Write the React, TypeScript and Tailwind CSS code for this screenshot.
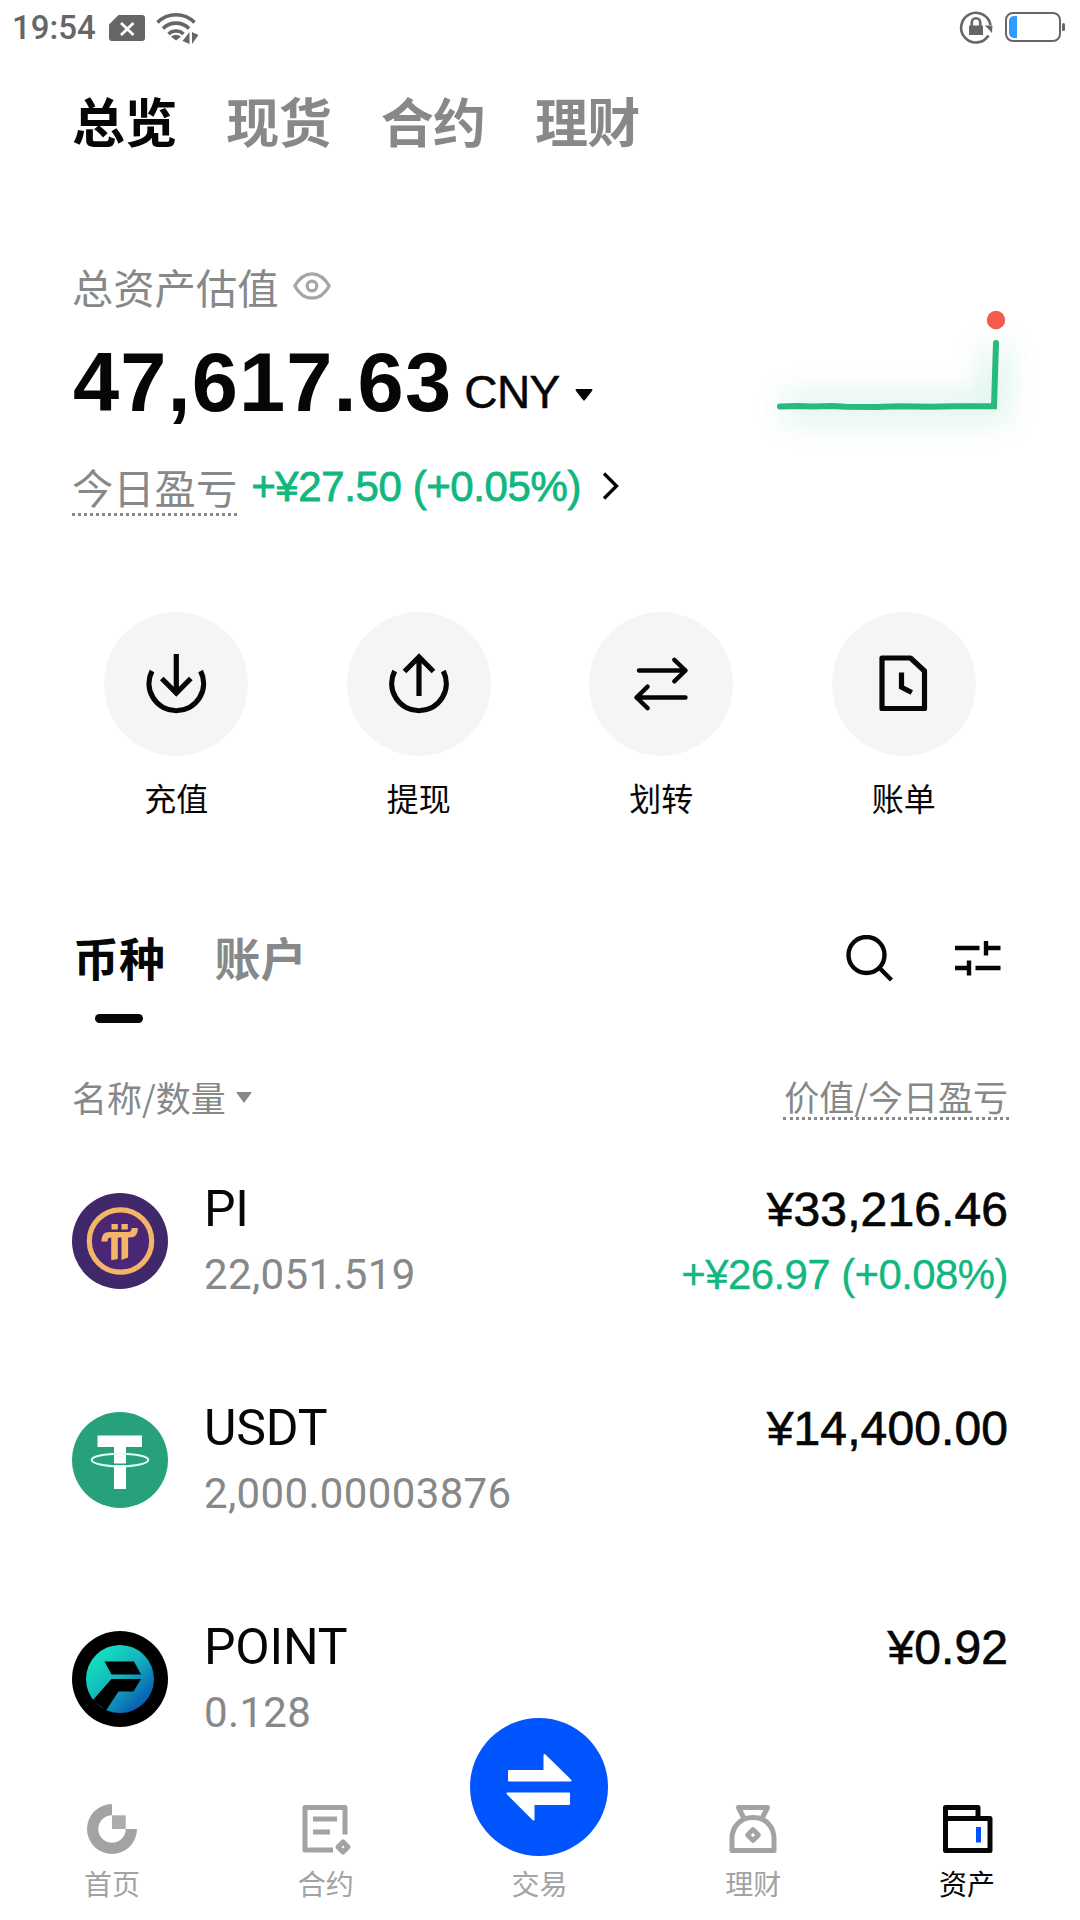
import type { ReactNode } from "react"

const MAIN_TABS = ["总览", "现货", "合约", "理财"]

const PiLogo = () => (
  <svg viewBox="0 0 96 96" className="size-24">
    <circle cx="48" cy="48" r="48" fill="#41286a" />
    <circle cx="48.5" cy="48" r="31.2" fill="#4a2675" stroke="#f4b567" strokeWidth="5.2" />
    <g fill="#f4b567">
      <rect x="39.5" y="31" width="6.3" height="5.5" />
      <rect x="49.5" y="31" width="6.3" height="5.5" />
      <path d="M29.5 48.5c0-6.500 2.500-9.500 8-9.500H56c2.800 0 3.600-1.300 3.600-4h6.300c0 6.500-2.700 9.500-8 9.500H39c-2.600 0-3.500 1.300-3.500 4z" />
      <path d="M39.2 43h6.600v23l-6.600 1.300zM49.500 43h6.600v21.500l-6.600 2.500z" />
    </g>
  </svg>
)

const UsdtLogo = () => (
  <svg viewBox="0 0 96 96" className="size-24">
    <circle cx="48" cy="48" r="48" fill="#26a17b" />
    <path d="M25.5 23.500H70V35H54v42H42V35H25.500z" fill="#fff" />
    <ellipse cx="48" cy="48" rx="28.3" ry="6.3" fill="none" stroke="#e4fff5" strokeWidth="2" />
    <path d="M42 51.500h12v1.500H42z" fill="#26a17b" />
  </svg>
)

const PointLogo = () => (
  <svg viewBox="0 0 96 96" className="size-24">
    <defs>
      <linearGradient id="pointFill" x1="0.2" y1="0.15" x2="0.85" y2="0.85">
        <stop offset="0" stopColor="#14dcc0" />
        <stop offset="0.45" stopColor="#14b4bd" />
        <stop offset="1" stopColor="#0a5cb4" />
      </linearGradient>
    </defs>
    <circle cx="48" cy="48" r="48" fill="#000" />
    <circle cx="48" cy="48" r="34" fill="url(#pointFill)" />
    <path d="M32.5 30.500H62L69 43.500H39.500z" fill="#000" />
    <path d="M39.5 48H69L61.500 60.500H46.500L34 79.500 20.500 69.500z" fill="#000" />
  </svg>
)

const COINS = [
  { name: "PI", amount: "22,051.519", value: "¥33,216.46", pnl: "+¥26.97 (+0.08%)", logo: <PiLogo /> },
  { name: "USDT", amount: "2,000.00003876", value: "¥14,400.00", pnl: "", logo: <UsdtLogo /> },
  { name: "POINT", amount: "0.128", value: "¥0.92", pnl: "", logo: <PointLogo /> },
]

const ACTIONS: { label: string; icon: ReactNode }[] = [
  {
    label: "充值",
    icon: (
      <>
        <path d="M6 17a27.300 27.300 0 1 0 48.600 0" />
        <path d="M30.300 0v39M15.800 24.500l14.500 14.500 14.500-14.500" />
      </>
    ),
  },
  {
    label: "提现",
    icon: (
      <>
        <path d="M5.700 17a27.300 27.300 0 1 0 48.600 0" />
        <path d="M30 42V3.500M15.500 17.500 30 3l14.500 14.500" />
      </>
    ),
  },
  {
    label: "划转",
    icon: (
      <g strokeWidth="4.4" strokeLinecap="round" strokeLinejoin="round">
        <path d="M8 16.500h46.500M43.300 5.800 54.500 16.500 43.300 27.300" />
        <path d="M54.500 43.500h-49M16.600 32.700 5.500 43.500l11.100 10.700" />
      </g>
    ),
  },
  {
    label: "账单",
    icon: (
      <>
        <path d="M8 4h28.500L50.500 17v37.500H8z" strokeLinejoin="round" />
        <path d="M27.500 18.500v14.700l10.300 5.300" />
      </>
    ),
  },
]

const NAV: { label: string; icon: ReactNode }[] = [
  {
    label: "首页",
    icon: (
      <>
        <path d="M25 1A25 25 0 1 0 50 26H38.700A13.700 13.700 0 1 1 25 12.300z" fill="currentColor" />
        <path d="M25 12.300h13.700V26H25z" fill="currentColor" opacity="0.9" />
      </>
    ),
  },
  {
    label: "合约",
    icon: (
      <g fill="none" stroke="currentColor" strokeWidth="5">
        <path d="M32 47H4V4.500h40v27" strokeLinejoin="round" />
        <path d="M12 16h24M12 29h17" />
        <path d="m42 39 5 5-5 5-5-5z" strokeLinejoin="round" />
      </g>
    ),
  },
  { label: "交易", icon: null },
  {
    label: "理财",
    icon: (
      <g fill="none" stroke="currentColor" strokeWidth="5" strokeLinejoin="round">
        <path d="M16.300 16 10.500 4.500h29L33.700 16" />
        <path d="M4 47.500V35.500C4 24 12 14.500 25 14.500S46 24 46 35.500v12z" />
        <path d="m25 26.500 5.500 5.500-5.500 5.500-5.500-5.500z" strokeWidth="4.6" />
      </g>
    ),
  },
  {
    label: "资产",
    icon: (
      <g fill="none" stroke="currentColor" strokeWidth="5" strokeLinejoin="round">
        <path d="M3.500 15.500H48v32H3.500zM3.500 15.500V4.500H36v11" />
        <path d="M36.500 24v15.500" stroke="#0052ff" />
      </g>
    ),
  },
]

function StatusBar() {
  return (
    <div className="flex h-[55px] items-center justify-between pr-[15px] pl-[12px] text-[#666]">
      <div className="flex items-center">
        <span className="w-[97px] font-[Roboto,sans-serif] text-[33px] leading-[58px] font-medium">19:54</span>
        <svg viewBox="0 0 36 26" className="h-[26px] w-[36px]">
          <path d="M9.500 0H33a3 3 0 0 1 3 3v20a3 3 0 0 1-3 3H3a3 3 0 0 1-3-3V9.500z" fill="#666" />
          <path d="m12 8 12.500 12M24.500 8 12 20" stroke="#fff" strokeWidth="2.8" />
        </svg>
        <svg viewBox="0 0 42 32" className="ml-[11px] h-[32px] w-[42px]" fill="none" stroke="#666" strokeWidth="3.6">
          <path d="M1.500 10.500a26 26 0 0 1 37 0" />
          <path d="M7 16.500a18.500 18.500 0 0 1 26 0" />
          <path d="M12.500 22a11 11 0 0 1 15 0" />
          <path d="M20 28.500 15 24.800a7 7 0 0 1 10 0z" fill="#666" stroke="none" />
          <path d="M33.500 20v12L26.500 29zM36 32V20l6.500 3z" fill="#666" stroke="none" />
        </svg>
      </div>
      <div className="-mt-px flex items-center gap-[12px]">
        <svg viewBox="0 0 34 34" className="size-[34px]" fill="none" stroke="#666" strokeWidth="2.6">
          <path d="M29.500 25.500A14.800 14.800 0 1 1 31.500 15" />
          <path d="M26 15.500h7.500l-.5 7.500z" fill="#666" stroke="none" />
          <path d="M10 15.500h14V25H10z" fill="#666" stroke="none" />
          <path d="M12.800 16v-3.500a4.200 4.200 0 0 1 8.400 0V16" />
        </svg>
        <svg viewBox="0 0 60 30" className="h-[30px] w-[60px]">
          <rect x="1" y="1" width="54" height="28" rx="7" fill="none" stroke="#666" strokeWidth="2" />
          <path d="M12 4v22H9a5 5 0 0 1-5-5V9a5 5 0 0 1 5-5z" fill="#2e9bff" />
          <rect x="57" y="11" width="3" height="8" rx="1.5" fill="#666" />
        </svg>
      </div>
    </div>
  )
}

function Balance() {
  return (
    <section className="flex h-[352px] justify-between pt-[111px] pl-[73px]">
      <div className="flex flex-col">
        <div className="flex h-[50px] items-center">
          <span className="-ml-px text-[41.3px] leading-[50px] text-[#868889]">总资产估值</span>
          <svg viewBox="0 0 38 28" className="ml-[14px] h-[28px] w-[38px]" fill="none" stroke="#a4a5a6" strokeWidth="3.2">
            <path d="M1.800 14C6 6.500 12 1.800 19 1.800S32 6.500 36.200 14C32 21.500 26 26.200 19 26.200S6 21.500 1.800 14z" />
            <circle cx="19" cy="14" r="4.8" />
          </svg>
        </div>
        <div className="mt-[30px] flex h-[84px] items-center font-['Liberation_Sans',sans-serif] text-[#060606]">
          <span className="text-[83px] leading-[84px] font-bold tracking-[1.1px]">47,617.63</span>
          <span className="mt-[18px] ml-[12px] text-[46px] leading-[60px] tracking-[-0.5px] [-webkit-text-stroke:0.5px]">CNY</span>
          <svg viewBox="0 0 18 12" className="mt-[23px] ml-[15px] h-[12px] w-[18px]">
            <path d="M1 0h16q1 1 0 2L10 11q-1 1-2 0L1 2Q0 1 1 0z" fill="#060606" />
          </svg>
        </div>
        <div className="mt-[35px] flex h-[60px] items-center">
          <span className="mt-px -ml-px h-[55px] border-b-[3px] border-dotted border-[#868889] text-[41.3px] leading-[51px] text-[#868889]">
            今日盈亏
          </span>
          <span className="-mt-[3px] ml-[14px] font-['Liberation_Sans',sans-serif] text-[42px] leading-[52px] tracking-[-0.4px] text-[#10b77f] [-webkit-text-stroke:0.8px]">
            +¥27.50 (+0.05%)
          </span>
          <svg viewBox="0 0 17 28" className="-mt-[5px] ml-[21px] h-[28px] w-[17px]" fill="none" stroke="#060606" strokeWidth="3.4">
            <path d="M2 1.500 14.500 14 2 26.500" />
          </svg>
        </div>
      </div>

      <svg viewBox="0 0 340 180" className="mt-[26px] h-[180px] w-[340px]">
        <defs>
          <filter id="glow" x="-30%" y="-60%" width="160%" height="260%">
            <feGaussianBlur stdDeviation="14" />
          </filter>
        </defs>
        <path d="M44 121H254L256 62" fill="none" stroke="#28b97d" strokeOpacity="0.16" strokeWidth="26" filter="url(#glow)" />
        <path d="M40 119.500 58 119l14 .5 20-.5 14 .8 30 .3 24-.8 30 .5 24-.6h40L256 56" fill="none" stroke="#28b97d" strokeWidth="6" strokeLinecap="round" />
        <circle cx="256" cy="33" r="9.2" fill="#f55b4b" />
      </svg>
    </section>
  )
}

function BottomNav() {
  return (
    <nav className="grid h-[141px] grid-cols-5 pr-[6px] pl-[5px]">
      {NAV.map(({ label, icon }) => (
        <div
          key={label}
          className={`relative flex flex-col items-center pt-[18px] ${label === "资产" ? "text-[#060606]" : "text-[#a1a3a4]"}`}
        >
          {icon ? (
            <svg viewBox="0 0 50 52" className="h-[52px] w-[50px] overflow-visible">
              {icon}
            </svg>
          ) : (
            <>
              <div className="h-[52px]" />
              <div className="absolute -top-[67px] flex size-[138px] items-center justify-center rounded-full bg-[#0055ff]">
                <svg viewBox="0 0 66 68" className="h-[68px] w-[66px]" fill="#fff" stroke="#fff" strokeWidth="2" strokeLinejoin="round">
                  <path d="M3 18h35.500V2L64.500 27.500H3z" />
                  <path d="M63 40.500H1.500L27.500 66.500V51H63z" />
                </svg>
              </div>
            </>
          )}
          <span className="mt-[8px] text-[28px] leading-[40px]">{label}</span>
        </div>
      ))}
    </nav>
  )
}

export default function App() {
  return (
    <div className="flex h-[1920px] w-[1080px] flex-col overflow-hidden bg-white font-['Noto_Sans_CJK_SC',sans-serif]">
      <StatusBar />

      <div className="mt-[35px] flex h-[60px] gap-[49.5px] pl-[72px] text-[53px] leading-[60px] font-bold tracking-[-0.6px]">
        {MAIN_TABS.map((tab) => (
          <span key={tab} className={tab === "总览" ? "text-[#060606]" : "text-[#868889]"}>
            {tab}
          </span>
        ))}
      </div>

      <Balance />

      <div className="mt-[110px] grid grid-cols-4 px-[55px]">
        {ACTIONS.map(({ label, icon }) => (
          <div key={label} className="flex flex-col items-center">
            <div className="flex size-[144px] items-center justify-center rounded-full bg-[#f4f5f7]">
              <svg viewBox="0 0 60 60" className="size-[60px] overflow-visible" fill="none" stroke="#060606" strokeWidth="5.2">
                {icon}
              </svg>
            </div>
            <span className="mt-[21px] text-[32px] leading-[40px] text-[#060606]">{label}</span>
          </div>
        ))}
      </div>

      <div className="mt-[103px] flex h-[104px] justify-between pr-[79px] pl-[73px]">
        <div className="flex gap-[49.5px] text-[46px] leading-[72px] font-bold">
          <div className="flex flex-col items-center text-[#060606]">
            币种
            <span className="mt-[22px] h-[9px] w-[48px] rounded-full bg-[#060606]" />
          </div>
          <span className="text-[#868889]">账户</span>
        </div>
        <div className="flex h-[72px] items-center gap-[62px] pt-[5px]">
          <svg viewBox="0 0 47 47" className="size-[47px]" fill="none" stroke="#060606" strokeWidth="4.4">
            <circle cx="20.5" cy="20" r="18" />
            <path d="m33 32.500 12.500 12.500" />
          </svg>
          <svg viewBox="0 0 46 36" className="h-[36px] w-[46px]" fill="none" stroke="#060606" strokeWidth="4.4">
            <path d="M0 7h24.500M31-.5v15M31 7h14.500M0 27h15M14 19.500v15M20.500 27h25" />
          </svg>
        </div>
      </div>

      <div className="mt-[46px] flex h-[60px] items-center justify-between pr-[71px] pl-[72px] text-[35px] leading-[46px] text-[#868889]">
        <div className="-mt-px flex items-center">
          名称/数量
          <svg viewBox="0 0 16 11" className="mt-px ml-[10px] h-[11px] w-[16px]">
            <path d="M0 0h16L8 11z" fill="#868889" />
          </svg>
        </div>
        <span className="-mt-[2px] h-[47px] border-b-[3px] border-dotted border-[#868889] px-px">价值/今日盈亏</span>
      </div>

      <div className="mt-[54px] flex h-[604px] flex-col">
        {COINS.map((coin) => (
          <div key={coin.name} className="flex h-[219px] shrink-0 justify-between pr-[72px] pl-[72px]">
            <div className="flex gap-[36px]">
              <div className="pt-[12px]">{coin.logo}</div>
              <div className="-mt-[2px] flex flex-col font-[Roboto,sans-serif]">
                <span className="text-[50px] leading-[60px] tracking-[-0.2px] text-[#060606]">{coin.name}</span>
                <span className="mt-[7px] text-[42px] leading-[58px] tracking-[0.35px] text-[#868889]">{coin.amount}</span>
              </div>
            </div>
            <div className="-mt-[3px] flex flex-col items-end font-['Liberation_Sans',sans-serif]">
              <span className="text-[48px] leading-[64px] tracking-[0.1px] text-[#060606] [-webkit-text-stroke:0.7px]">{coin.value}</span>
              <span className="mt-[3px] text-[42px] leading-[60px] tracking-[-0.6px] text-[#10b77f] [-webkit-text-stroke:0.3px]">
                {coin.pnl}
              </span>
            </div>
          </div>
        ))}
      </div>

      <BottomNav />
    </div>
  )
}
